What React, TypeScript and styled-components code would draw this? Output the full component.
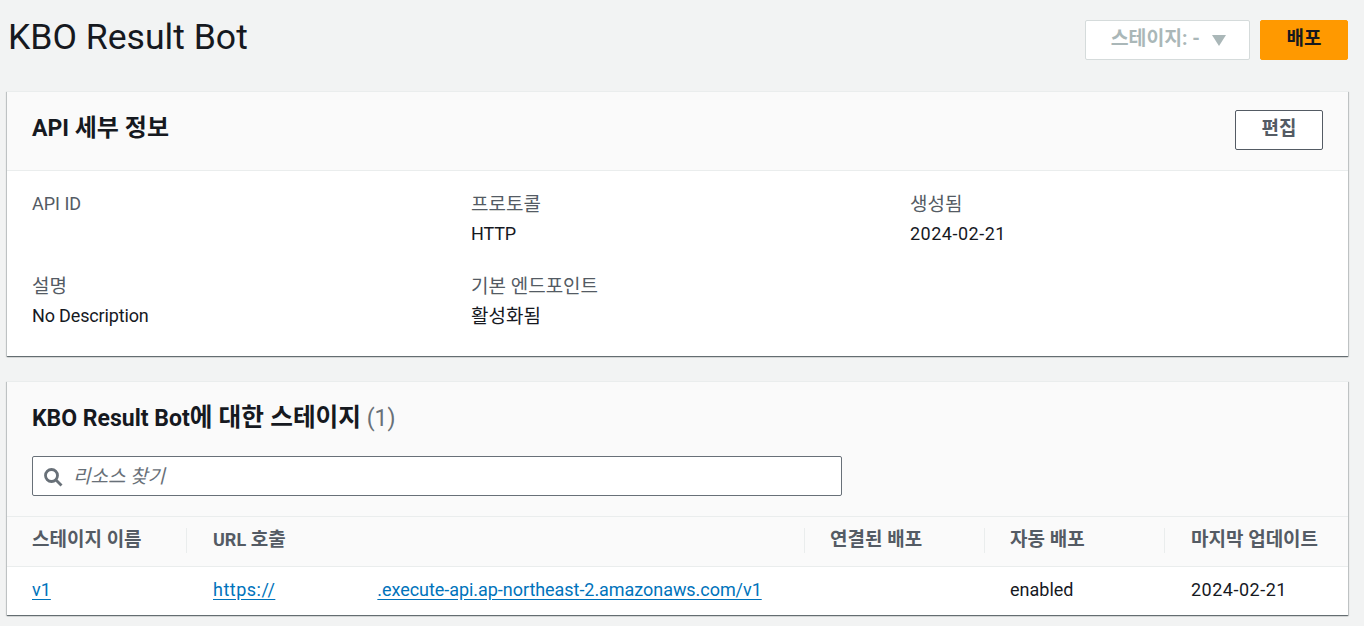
import { FunctionComponent } from 'react'
import styled, { createGlobalStyle } from 'styled-components'

const GlobalStyle = createGlobalStyle`
    html, body {
        margin: 0;
        padding: 0;
        background: #f2f3f3;
    }
    body {
        font-family: Roboto, "Noto Sans CJK KR", sans-serif;
        font-size: 18px;
        color: #16191f;
    }
`

const Page = styled.div`
    display: flex;
    flex-direction: column;
    width: 1364px;
    height: 626px;
    overflow: hidden;
    padding: 0 16px 0 7px;
    box-sizing: border-box;
`

const TopBar = styled.div`
    display: flex;
    justify-content: space-between;
    height: 91px;
    flex-shrink: 0;
`

const Title = styled.h1`
    margin: 14px 0 0 1px;
    font-size: 35.6px;
    line-height: 46px;
    font-weight: 400;
`

const Actions = styled.div`
    display: flex;
    gap: 10px;
    padding-top: 20px;
`

const StageSelect = styled.div`
    display: flex;
    align-items: center;
    justify-content: flex-end;
    gap: 12px;
    width: 165px;
    height: 40px;
    padding: 0 23px 7px 0;
    box-sizing: border-box;
    background: #fff;
    border: 1px solid #d5dbdb;
    border-radius: 2px;
    color: #aab7b8;
    font-weight: 700;
    font-size: 19.4px;
`

const Caret = styled.span`
    width: 0;
    height: 0;
    border-left: 7px solid transparent;
    border-right: 7px solid transparent;
    border-top: 11px solid #aab7b8;
    margin-top: 8px;
`

const Button = styled.button<{ $primary?: boolean }>`
    display: flex;
    align-items: center;
    justify-content: center;
    width: 88px;
    height: 40px;
    padding: 0 0 8px;
    box-sizing: border-box;
    font-family: inherit;
    font-size: 19px;
    font-weight: 700;
    border-radius: 2px;
    background: ${({ $primary }) => ($primary ? '#ff9900' : '#fff')};
    border: 1px solid ${({ $primary }) => ($primary ? '#ff9900' : '#545b64')};
    color: ${({ $primary }) => ($primary ? '#16191f' : '#545b64')};
`

const Card = styled.section<{ $height: number; $gap?: number }>`
    display: flex;
    flex-direction: column;
    height: ${({ $height }) => $height}px;
    margin-top: ${({ $gap }) => $gap ?? 0}px;
    flex-shrink: 0;
    background: #fff;
    box-shadow: 0 1px 1px 0 rgba(50, 60, 65, 0.6), 1px 1px 1px 0 rgba(0, 28, 36, 0.15), -1px 1px 1px 0 rgba(0, 28, 36, 0.15);
    border-top: 1px solid #eaeded;
    box-sizing: border-box;
`

const DetailsHeader = styled.div`
    display: flex;
    align-items: flex-start;
    justify-content: space-between;
    flex-shrink: 0;
    height: 79px;
    padding: 18px 25px 0;
    box-sizing: border-box;
    background: #fafafa;
    border-bottom: 1px solid #eaeded;
`

const CardTitle = styled.h2`
    margin: 3px 0 0;
    font-size: 23px;
    line-height: 30px;
    font-weight: 700;
`

const TitleKo = styled.span<{ $size: number }>`
    font-size: ${({ $size }) => $size}px;
`

const Count = styled.span`
    font-weight: 400;
    color: #687078;
`

const DetailsGrid = styled.div`
    display: grid;
    grid-template-columns: repeat(3, 439px);
    grid-auto-rows: 82px;
    padding: 18px 25px 0;
`

const Label = styled.div`
    color: #545b64;
    font-size: 18px;
    line-height: 30px;
`

const LabelKo = styled(Label)`
    font-size: 19px;
    padding-top: 1px;
    margin-bottom: -1px;
`

const Value = styled.div`
    font-size: 18px;
    line-height: 30px;
    letter-spacing: -0.15px;
`

const DateValue = styled(Value)`
    letter-spacing: 0.5px;
`

const ValueKo = styled(Value)`
    font-size: 19px;
    padding-top: 1px;
    letter-spacing: 0;
`

const StagesHeader = styled.div`
    display: flex;
    flex-direction: column;
    flex-shrink: 0;
    height: 135px;
    padding: 18px 25px 0;
    box-sizing: border-box;
    background: #fafafa;
    border-bottom: 1px solid #eaeded;
`

const SearchBox = styled.div`
    display: flex;
    align-items: center;
    gap: 10px;
    width: 810px;
    height: 40px;
    margin-top: 22px;
    padding: 0 0 4px 10px;
    box-sizing: border-box;
    background: #fff;
    border: 1px solid #687078;
    border-radius: 2px;
    color: #687078;
    font-size: 19px;
    font-style: italic;
`

const SearchIcon = styled.svg`
    width: 20px;
    height: 20px;
    margin-top: 5px;
    flex-shrink: 0;
    fill: none;
    stroke: #687078;
    stroke-width: 2.8;
`

const Table = styled.table`
    width: 100%;
    border-collapse: collapse;
    table-layout: fixed;
`

const HeadRow = styled.tr`
    height: 49px;
    background: #fafafa;
    border-bottom: 1px solid #eaeded;
`

const Th = styled.th<{ $width: number; $inset: number; $divider?: boolean }>`
    position: relative;
    width: ${({ $width }) => $width}px;
    padding: 0 0 7px ${({ $inset }) => $inset}px;
    box-sizing: border-box;
    text-align: left;
    color: #545b64;
    font-size: 19px;
    font-weight: 700;

    &::before {
        content: '';
        display: ${({ $divider }) => ($divider ? 'block' : 'none')};
        position: absolute;
        left: -1px;
        top: 11px;
        bottom: 13px;
        width: 1px;
        background: #eaeded;
    }
`

const ThLatin = styled.span`
    font-size: 18px;
`

const Td = styled.td<{ $inset: number }>`
    height: 48px;
    padding: 0 0 2px ${({ $inset }) => $inset}px;
    box-sizing: border-box;
    font-size: 18px;
`

const DateCell = styled(Td)`
    letter-spacing: 0.5px;
`

const Link = styled.a`
    color: #0073bb;
    text-decoration: underline;
    text-underline-offset: 3px;
`

const Scheme = styled.span`
    letter-spacing: 0.5px;
`

const UrlHost = styled.span`
    letter-spacing: -0.05px;
`

const UrlGap = styled.span`
    display: inline-block;
    width: 102px;
`

const App: FunctionComponent = () => {
    return (
        <Page>
            <GlobalStyle />
            <TopBar>
                <Title>KBO Result Bot</Title>
                <Actions>
                    <StageSelect>
                        스테이지: -
                        <Caret />
                    </StageSelect>
                    <Button $primary>배포</Button>
                </Actions>
            </TopBar>
            <Card $height={265}>
                <DetailsHeader>
                    <CardTitle>API <TitleKo $size={24}>세부 정보</TitleKo></CardTitle>
                    <Button>편집</Button>
                </DetailsHeader>
                <DetailsGrid>
                    <div>
                        <Label>API ID</Label>
                    </div>
                    <div>
                        <LabelKo>프로토콜</LabelKo>
                        <Value>HTTP</Value>
                    </div>
                    <div>
                        <LabelKo>생성됨</LabelKo>
                        <DateValue>2024-02-21</DateValue>
                    </div>
                    <div>
                        <LabelKo>설명</LabelKo>
                        <Value>No Description</Value>
                    </div>
                    <div>
                        <LabelKo>기본 엔드포인트</LabelKo>
                        <ValueKo>활성화됨</ValueKo>
                    </div>
                </DetailsGrid>
            </Card>
            <Card $height={234} $gap={25}>
                <StagesHeader>
                    <CardTitle>
                        KBO Result Bot<TitleKo $size={24.7}>에 대한 스테이지</TitleKo> <Count>(1)</Count>
                    </CardTitle>
                    <SearchBox>
                        <SearchIcon viewBox="0 0 20 20">
                            <circle cx="8.5" cy="8.5" r="6" />
                            <path d="M13 13l5.5 5.5" />
                        </SearchIcon>
                        리소스 찾기
                    </SearchBox>
                </StagesHeader>
                <Table>
                    <thead>
                        <HeadRow>
                            <Th $width={180} $inset={25}>스테이지 이름</Th>
                            <Th $width={618} $inset={26} $divider><ThLatin>URL</ThLatin> 호출</Th>
                            <Th $width={180} $inset={25} $divider>연결된 배포</Th>
                            <Th $width={180} $inset={25} $divider>자동 배포</Th>
                            <Th $width={183} $inset={26} $divider>마지막 업데이트</Th>
                        </HeadRow>
                    </thead>
                    <tbody>
                        <tr>
                            <Td $inset={25}><Link>v1</Link></Td>
                            <Td $inset={26}>
                                <Link><Scheme>https://</Scheme><UrlGap /><UrlHost>.execute-api.ap-northeast-2.amazonaws.com/v1</UrlHost></Link>
                            </Td>
                            <Td $inset={25} />
                            <Td $inset={25}>enabled</Td>
                            <DateCell $inset={26}>2024-02-21</DateCell>
                        </tr>
                    </tbody>
                </Table>
            </Card>
        </Page>
    )
}

export default App
